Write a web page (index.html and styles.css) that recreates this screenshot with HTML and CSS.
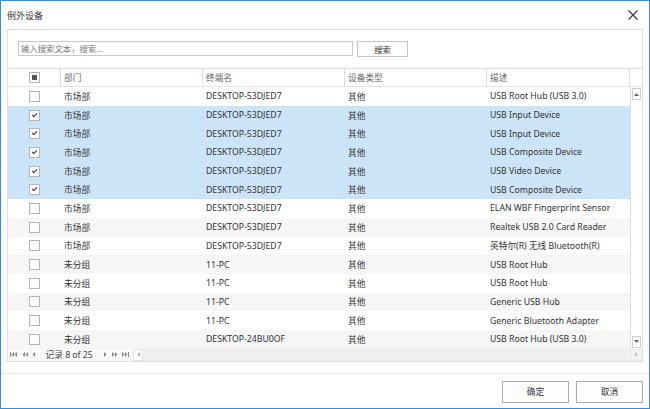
FILE: index.html
```html
<!DOCTYPE html>
<html lang="zh">
<head>
<meta charset="utf-8">
<title>例外设备</title>
<link rel="stylesheet" href="styles.css">
</head>
<body>
<div class="window">
  <div class="titlebar">
    <span class="title">例外设备</span>
    <svg class="close" width="10" height="10" viewBox="0 0 10 10"><path d="M0.5 0.5 L9.5 9.5 M9.5 0.5 L0.5 9.5" stroke="#333" stroke-width="1.1" fill="none"/></svg>
  </div>
  <div class="panel">
    <div class="search">
      <div class="search-input">输入搜索文本，搜索...</div>
      <div class="btn search-btn">搜索</div>
    </div>
    <div class="grid-head">
      <div class="hc chk-col"><span class="cb cb-ind"></span></div>
      <div class="hc">部门</div>
      <div class="hc">终端名</div>
      <div class="hc">设备类型</div>
      <div class="hc">描述</div>
      <div class="hc scroll-col"></div>
    </div>
    <div class="grid-body">
      <div class="rows">
        <div class="row"><div class="c chk-col"><span class="cb"></span></div><div class="c">市场部</div><div class="c">DESKTOP-53DJED7</div><div class="c">其他</div><div class="c">USB Root Hub (USB 3.0)</div></div>
        <div class="row sel"><div class="c chk-col"><span class="cb on"></span></div><div class="c">市场部</div><div class="c">DESKTOP-53DJED7</div><div class="c">其他</div><div class="c">USB Input Device</div></div>
        <div class="row sel"><div class="c chk-col"><span class="cb on"></span></div><div class="c">市场部</div><div class="c">DESKTOP-53DJED7</div><div class="c">其他</div><div class="c">USB Input Device</div></div>
        <div class="row sel"><div class="c chk-col"><span class="cb on"></span></div><div class="c">市场部</div><div class="c">DESKTOP-53DJED7</div><div class="c">其他</div><div class="c">USB Composite Device</div></div>
        <div class="row sel"><div class="c chk-col"><span class="cb on"></span></div><div class="c">市场部</div><div class="c">DESKTOP-53DJED7</div><div class="c">其他</div><div class="c">USB Video Device</div></div>
        <div class="row sel"><div class="c chk-col"><span class="cb on"></span></div><div class="c">市场部</div><div class="c">DESKTOP-53DJED7</div><div class="c">其他</div><div class="c">USB Composite Device</div></div>
        <div class="row"><div class="c chk-col"><span class="cb"></span></div><div class="c">市场部</div><div class="c">DESKTOP-53DJED7</div><div class="c">其他</div><div class="c">ELAN WBF Fingerprint Sensor</div></div>
        <div class="row alt"><div class="c chk-col"><span class="cb"></span></div><div class="c">市场部</div><div class="c">DESKTOP-53DJED7</div><div class="c">其他</div><div class="c">Realtek USB 2.0 Card Reader</div></div>
        <div class="row"><div class="c chk-col"><span class="cb"></span></div><div class="c">市场部</div><div class="c">DESKTOP-53DJED7</div><div class="c">其他</div><div class="c">英特尔(R) 无线 Bluetooth(R)</div></div>
        <div class="row alt"><div class="c chk-col"><span class="cb"></span></div><div class="c">未分组</div><div class="c">11-PC</div><div class="c">其他</div><div class="c">USB Root Hub</div></div>
        <div class="row"><div class="c chk-col"><span class="cb"></span></div><div class="c">未分组</div><div class="c">11-PC</div><div class="c">其他</div><div class="c">USB Root Hub</div></div>
        <div class="row alt"><div class="c chk-col"><span class="cb"></span></div><div class="c">未分组</div><div class="c">11-PC</div><div class="c">其他</div><div class="c">Generic USB Hub</div></div>
        <div class="row"><div class="c chk-col"><span class="cb"></span></div><div class="c">未分组</div><div class="c">11-PC</div><div class="c">其他</div><div class="c">Generic Bluetooth Adapter</div></div>
        <div class="row alt"><div class="c chk-col"><span class="cb"></span></div><div class="c">未分组</div><div class="c">DESKTOP-24BU0OF</div><div class="c">其他</div><div class="c">USB Root Hub (USB 3.0)</div></div>
      </div>
      <div class="vscroll">
        <div class="sbtn"><svg width="5" height="3" viewBox="0 0 5 3"><path d="M0 3 L2.5 0 L5 3 Z" fill="#666"/></svg></div>
        <div class="vtrack"></div>
        <div class="sbtn"><svg width="5" height="3" viewBox="0 0 5 3"><path d="M0 0 L2.5 3 L5 0 Z" fill="#666"/></svg></div>
      </div>
    </div>
    <div class="pager">
      <div class="nav">
        <svg class="pg" width="7" height="5" viewBox="0 0 7 5"><path d="M0.5 0 V5" stroke="#888" stroke-width="1"/><path d="M4 0 L1.5 2.5 L4 5 Z M7 0 L4.5 2.5 L7 5 Z" fill="#888"/></svg>
        <svg class="pg" width="6" height="5" viewBox="0 0 6 5"><path d="M3 0 L0.5 2.5 L3 5 Z M6 0 L3.5 2.5 L6 5 Z" fill="#888"/></svg>
        <svg class="pg" width="3" height="5" viewBox="0 0 3 5"><path d="M3 0 L0.5 2.5 L3 5 Z" fill="#888"/></svg>
        <span class="pg-text">记录 8 of 25</span>
        <svg class="pg" width="3" height="5" viewBox="0 0 3 5"><path d="M0 0 L2.5 2.5 L0 5 Z" fill="#888"/></svg>
        <svg class="pg" width="6" height="5" viewBox="0 0 6 5"><path d="M0 0 L2.5 2.5 L0 5 Z M3 0 L5.5 2.5 L3 5 Z" fill="#888"/></svg>
        <svg class="pg" width="7" height="5" viewBox="0 0 7 5"><path d="M0 0 L2.5 2.5 L0 5 Z M3 0 L5.5 2.5 L3 5 Z" fill="#888"/><path d="M6.5 0 V5" stroke="#888" stroke-width="1"/></svg>
      </div>
      <div class="hscroll">
        <div class="hbtn"><svg width="3" height="5" viewBox="0 0 3 5"><path d="M3 0 L0.5 2.5 L3 5 Z" fill="#aaa"/></svg></div>
        <div class="htrack"></div>
        <div class="hbtn end"><svg width="3" height="5" viewBox="0 0 3 5"><path d="M0 0 L2.5 2.5 L0 5 Z" fill="#bbb"/></svg></div>
      </div>
    </div>
  </div>
  <div class="footer">
    <div class="btn dlg-btn">确定</div>
    <div class="btn dlg-btn">取消</div>
  </div>
</div>
</body>
</html>
```
FILE: styles.css
```css
* { box-sizing: border-box; }
html, body { margin: 0; padding: 0; background: #fff; }
body {
  font-family: "Noto Sans", "Noto Sans CJK SC", sans-serif;
  font-size: 8.7px;
  color: #333;
}
.window {
  width: 650px;
  height: 409px;
  border: 1px solid #3c8bd9;
  display: flex;
  flex-direction: column;
  background: #fff;
}
.titlebar {
  height: 28px;
  display: flex;
  align-items: center;
  justify-content: space-between;
  padding: 0 11px 0 6px;
}
.title { font-size: 9px; color: #333; }
.close { display: block; }
.panel {
  margin: 0 6px;
  border: 1px solid #dedede;
  display: flex;
  flex-direction: column;
}
.search {
  height: 38px;
  display: flex;
  align-items: flex-start;
  padding: 11px 0 0 10px;
}
.search-input {
  width: 335px;
  height: 15px;
  border: 1px solid #c8c8c8;
  color: #777;
  padding-left: 2px;
  line-height: 13px;
  font-size: 8.4px;
}
.btn {
  border: 1px solid #c4c4c4;
  background: #fdfdfd;
  display: flex;
  align-items: center;
  justify-content: center;
  color: #333;
}
.search-btn {
  width: 51px;
  height: 16px;
  margin-left: 4px;
  font-size: 8.4px;
}
.grid-head {
  display: grid;
  grid-template-columns: 53px 142px 142px 142px 143px 1fr;
  height: 19px;
  border-top: 1px solid #dcdcdc;
  border-bottom: 1px solid #e6e6e6;
}
.hc {
  border-right: 1px solid #dcdcdc;
  color: #666;
  padding-left: 3px;
  display: flex;
  align-items: center;
}
.hc:last-child { border-right: none; }
.chk-col { justify-content: center; padding-left: 0; }
.grid-body { display: flex; height: 261.8px; }
.rows { flex: 1; }
.row {
  display: grid;
  grid-template-columns: 53px 142px 142px 142px 143px;
  height: 18.7px;
}
.row.alt { background: #f6f6f6; }
.row.sel { background: #cce4f7; }
.c {
  display: flex;
  align-items: center;
  padding-left: 3px;
  white-space: nowrap;
  overflow: hidden;
}
.c.chk-col { padding-left: 0; }
.cb {
  width: 11px;
  height: 11px;
  border: 1px solid #b5b5b5;
  background: #fff;
  display: flex;
  align-items: center;
  justify-content: center;
}
.cb.on::after {
  content: "";
  width: 4px;
  height: 2px;
  border-left: 1.2px solid #333;
  border-bottom: 1.2px solid #333;
  transform: translateY(-1px) rotate(-45deg);
}
.cb-ind::after {
  content: "";
  width: 5px;
  height: 5px;
  background: #555;
}
.vscroll {
  width: 12px;
  border-left: 1px solid #dcdcdc;
  display: flex;
  flex-direction: column;
  padding: 1px 0;
}
.sbtn {
  height: 12px;
  border: 1px solid #cfcfcf;
  margin: 0 1px 0 1px;
  display: flex;
  align-items: center;
  justify-content: center;
  background: #fff;
}
.vtrack { flex: 1; }
.pager {
  height: 12px;
  display: flex;
  background: #f9f9f9;
}
.nav {
  width: 125px;
  display: flex;
  align-items: center;
  padding-left: 2px;
  gap: 4.5px;
}
.pg { display: block; flex: none; }
.pg-text { font-size: 8.7px; margin: 0 7px 0 6px; color: #444; }
.hscroll {
  flex: 1;
  display: flex;
  background: #efefef;
}
.hbtn {
  width: 10px;
  background: #fff;
  border: 1px solid #e2e2e2;
  display: flex;
  align-items: center;
  justify-content: center;
}
.hbtn.end { width: 11px; background: #f3f3f3; border-color: #ececec; }
.htrack { flex: 1; }
.footer {
  margin-top: 11px;
  border-top: 1px solid #e4e4e4;
  padding: 7px 6px 0 0;
  display: flex;
  justify-content: flex-end;
  gap: 7px;
}
.dlg-btn {
  width: 67px;
  height: 22px;
  font-size: 8.7px;
  border-color: #adadad;
}
```
